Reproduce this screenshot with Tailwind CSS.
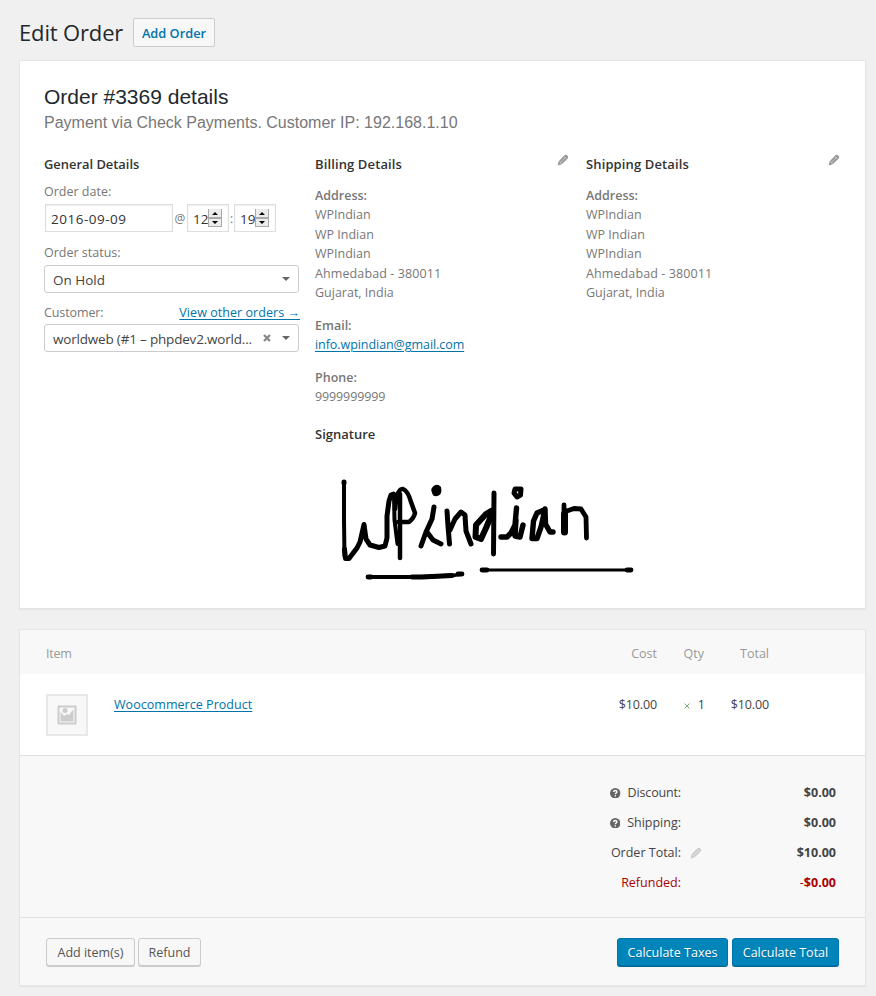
<!DOCTYPE html>
<html lang="en">
<head>
<meta charset="utf-8">
<title>Edit Order</title>
<script src="https://cdn.jsdelivr.net/npm/@tailwindcss/browser@4"></script>
</head>
<body class="bg-[#f0f0f0] font-['Open_Sans','Noto_Sans',sans-serif] text-[12.5px] leading-5 text-[#777]">
<svg class="hidden">
  <symbol id="pencil" viewBox="0 0 12 12">
    <path d="M.6 11.4 L1.7 7.2 L7.4 1.3 Q8.8 .1 10.4 1.4 Q11.9 3 10.7 4.5 L4.8 10.3 Z" fill="currentColor"/>
    <path d="M3.4 8.6 L8.3 3.7 M2.2 7.2 L4.8 9.800 M6.900 2.400 L9.500 5" stroke="#fff" stroke-opacity=".7" stroke-width=".6" fill="none"/>
  </symbol>
  <symbol id="help" viewBox="0 0 10 10">
    <circle cx="5" cy="5" r="5" fill="#666"/>
    <path d="M3.4 3.8 Q3.5 2.4 5 2.4 Q6.6 2.4 6.6 3.7 Q6.6 4.5 5.7 4.9 Q5.1 5.2 5.1 5.9 M5.1 6.9 V8" stroke="#fff" stroke-width="1.3" fill="none"/>
  </symbol>
  <symbol id="spin" viewBox="0 0 14 18">
    <rect width="14" height="18" fill="#aaa"/>
    <rect x="1" y="0" width="12" height="8" fill="#ececec"/>
    <rect x="1" y="10" width="12" height="7" fill="#ececec"/>
    <path d="M4 6 L7 3 L10 6 Z M4 12 L7 15 L10 12 Z" fill="#000"/>
  </symbol>
</svg>
<div class="h-[996px] w-[876px] overflow-hidden pl-[19px] pr-[10px] pt-[18px]">
  <header class="flex h-[29px] items-center">
    <h1 class="w-[114px] whitespace-nowrap text-[22px] leading-[29px] tracking-[-0.15px] text-[#23282d]">Edit Order</h1>
    <a class="flex h-[29px] w-[82px] items-center justify-center whitespace-nowrap rounded-[2px] border border-[#ccc] bg-[#f7f7f7] text-[12.8px] font-semibold text-[#0073aa]">Add Order</a>
  </header>

  <section class="mt-[13px] h-[549px] border border-[#e5e5e5] bg-white px-6 pt-6 shadow-[0_1px_1px_rgba(0,0,0,0.04)]">
    <h2 class="font-['Liberation_Sans',sans-serif] text-[21px] leading-6 text-[#23282d]">Order #3369 details</h2>
    <p class="mt-1 font-['Liberation_Sans',sans-serif] text-[16px] leading-5 text-[#777]">Payment via Check Payments. Customer IP: 192.168.1.10</p>

    <div class="mt-[22px] grid grid-cols-[255px_255px_255px] gap-4">
      <div>
        <h4 class="h-5 text-[12.9px] font-semibold leading-[18px] text-[#333]">General Details</h4>
        <div class="mt-[7px]">Order date:</div>
        <div class="mt-[2px] flex h-7 items-center pl-px text-[13.5px]">
          <div class="flex h-7 w-32 items-center border border-[#ddd] pl-[5px] pt-[2px] tracking-[0.5px] text-[#333] shadow-[inset_0_1px_2px_rgba(0,0,0,0.07)]">2016-09-09</div>
          <span class="w-[14px] pt-[2px] text-center text-[12px]">@</span>
          <div class="flex h-7 w-[42px] items-center border border-[#ddd] pl-[5px] text-[#333] shadow-[inset_0_1px_2px_rgba(0,0,0,0.07)]"><span class="w-[15px] overflow-hidden pt-[2px]">12</span><svg class="-mt-px h-[18px] w-[14px] shrink-0"><use href="#spin"/></svg></div>
          <span class="w-[5px] pt-[2px] text-center text-[12px]">:</span>
          <div class="flex h-7 w-[42px] items-center border border-[#ddd] pl-[5px] text-[#333] shadow-[inset_0_1px_2px_rgba(0,0,0,0.07)]"><span class="w-[15px] overflow-hidden pt-[2px]">19</span><svg class="-mt-px h-[18px] w-[14px] shrink-0"><use href="#spin"/></svg></div>
        </div>
        <div class="mt-[11px]">Order status:</div>
        <div class="mt-[2px] flex h-7 items-center justify-between rounded-[3px] border border-[#ccc] pl-2 pr-2 text-[13.5px] text-[#444]">
          <span class="pt-[2px]">On Hold</span>
          <svg class="h-1 w-2" viewBox="0 0 8 4"><path d="M0 0H8L4 4Z" fill="#666"/></svg>
        </div>
        <div class="mt-[10px] flex justify-between"><span class="tracking-[-0.1px]">Customer:</span><a class="-mr-px tracking-[0.05px] text-[#0073aa] underline underline-offset-2">View other orders →</a></div>
        <div class="mt-px flex h-7 items-center rounded-[3px] border border-[#ccc] pl-2 pr-2 text-[13.5px] text-[#444]">
          <span class="w-[210px] whitespace-nowrap pt-[2px] tracking-[-0.19px]">worldweb (#1 – phpdev2.world...</span>
          <svg class="-mt-px h-2 w-2" viewBox="0 0 8 8"><path d="M1 1L7 7M7 1L1 7" stroke="#888" stroke-width="2.3"/></svg>
          <svg class="ml-auto h-1 w-2" viewBox="0 0 8 4"><path d="M0 0H8L4 4Z" fill="#666"/></svg>
        </div>
      </div>

      <div>
        <div class="flex h-5 justify-between"><h4 class="text-[13px] font-semibold leading-[18px] tracking-[0.12px] text-[#333]">Billing Details</h4><svg class="-mt-px mr-px h-3 w-3 text-[#999]"><use href="#pencil"/></svg></div>
        <div class="mt-[10.5px] leading-[19.5px]">
          <b class="font-semibold">Address:</b><br>WPIndian<br>WP Indian<br>WPIndian<br><span class="tracking-[0.11px]">Ahmedabad - 380011</span><br>Gujarat, India
        </div>
        <div class="mt-[13px] leading-[19.5px]"><b class="font-semibold">Email:</b><br><a class="tracking-[-0.06px] text-[#0073aa] underline underline-offset-2">info.wpindian@gmail.com</a></div>
        <div class="mt-[13px] leading-[19.5px]"><b class="font-semibold">Phone:</b><br><span class="tracking-[-0.12px]">9999999999</span></div>
        <h4 class="mt-[18.5px] h-5 text-[13px] font-semibold leading-[18px] text-[#333]">Signature</h4>
        <svg class="mt-[20px] h-[125px] w-[330px]" viewBox="315 465 330 125" fill="none" stroke="#000" stroke-width="5" stroke-linecap="round" stroke-linejoin="round">
          <path stroke-width="4" d="M344 482 V520 L344.500 556"/>
          <path stroke-width="5" d="M344 482 V483 M344.500 549 L345.500 558.500 L349 558.500 L357 548 L360 542 L364 524.500 L366 539 L370 545 L379 547.500 L385 546 L387 538 L387 516 L389 501 L391 495 L393.500 494"/>
          <path stroke-width="4" d="M394 496 L394.500 520 L397.500 544"/>
          <path stroke-width="4.500" d="M400 558 V494 M395 509 L396 498 Q399 488 403 489 Q408 491 411 502 L415 513 Q414 518 409 522 L398 522"/>
          <path d="M434 507 L432 519 L426 532 L421 546 M427 532 L433 540 L441 544"/>
          <path stroke-width="6.500" d="M434.500 490 Q436 487 438 488.500 Q439 493 435.500 493 Z"/>
          <path d="M447 511 L448 526 L449.500 544 M450 530 L455 519 L461 512 L465 515 L466 531 L471 544"/>
          <path stroke-width="6" d="M491 511 L486 514 L476 525 L475.500 537 L481 539 L486 528 L491 516"/>
          <path stroke-width="5" d="M494 493 L493.500 554"/>
          <path stroke-width="5.400" d="M516.500 508 L515 525 L511 533 L507 537 L501 537 M516 520 L515 536 L520 537 L523 525"/>
          <path stroke-width="5" d="M515 489 L521 489 L520.500 495 L517 497 L514 493 Z"/>
          <path stroke-width="5.400" d="M544 510 L537 513 L533.500 521 L532 538.500 L537 538.500 L541 527 L545 509 L545.500 524 L550 532 L553 532"/>
          <path stroke-width="4.800" d="M564 505 V513 M564 512 L574 508.500 L581 509 L586 517 L586.500 538"/>
          <path stroke-width="7" d="M564.500 514 V532"/>
          <path stroke-width="3.800" d="M368 577 H420 L453 575.500 L462 574"/>
          <path stroke-width="3" d="M482 570 H630"/>
          <path stroke-width="4.800" d="M482 570 H487 M627 570 H631 M368 577 H371 M412 577 H422 L452 575.500 M458 574 H462"/>
        </svg>
      </div>

      <div>
        <div class="flex h-5 justify-between"><h4 class="text-[13px] font-semibold leading-[18px] tracking-[0.12px] text-[#333]">Shipping Details</h4><svg class="-mt-px mr-px h-3 w-3 text-[#999]"><use href="#pencil"/></svg></div>
        <div class="mt-[10.5px] leading-[19.5px]">
          <b class="font-semibold">Address:</b><br>WPIndian<br>WP Indian<br>WPIndian<br><span class="tracking-[0.11px]">Ahmedabad - 380011</span><br>Gujarat, India
        </div>
      </div>
    </div>
  </section>

  <section class="mt-5 h-[357px] border border-[#e5e5e5] bg-[#f8f8f8] shadow-[0_1px_1px_rgba(0,0,0,0.04)]">
    <div class="grid h-11 grid-cols-[68px_1fr_80px_47px_65px] items-center pl-[26px] pr-24 pt-[3px] text-right text-[#999]">
      <span class="text-left tracking-[-0.2px]">Item</span><span></span><span>Cost</span><span>Qty</span><span>Total</span>
    </div>
    <div class="grid h-[82px] grid-cols-[68px_1fr_80px_48px_64px] items-start border-b border-[#dfdfdf] bg-white pl-[26px] pr-24 pt-[21px] text-right text-[#444]">
      <div class="-mt-px flex h-[42px] w-[42px] items-center justify-center border-2 border-[#e8e8e8] bg-[#f8f8f8]">
        <svg class="h-5 w-5" viewBox="0 0 20 20"><rect x=".5" y=".5" width="19" height="19" rx="1" fill="#ccc"/><rect x="2.500" y="2.500" width="15" height="15" fill="#f8f8f8"/><path d="M3.500 16.500V7L7 11L10 9L12 10L16.500 4.500V16.500Z" fill="#ccc"/><circle cx="8" cy="5.500" r="2.500" fill="#ccc"/></svg>
      </div>
      <a class="text-left tracking-[0.04px] text-[#0073aa] underline underline-offset-2">Woocommerce Product</a>
      <span class="tracking-[-0.12px]">$10.00</span>
      <span class="flex items-center justify-end gap-2"><svg class="mt-0.5 h-[6px] w-[6px]" viewBox="0 0 6 6"><path d="M.5 .5L5.500 5.500M5.500 .5L.5 5.500" stroke="#6fa06f" stroke-width=".9"/></svg>1</span>
      <span class="tracking-[-0.12px]">$10.00</span>
    </div>
    <div class="flex h-[162px] flex-col border-b border-[#dfdfdf] pr-[29px] pt-[22px] leading-[30px] text-[#444]">
      <div class="flex h-[30px] items-center justify-end"><svg class="mr-[7px] h-[10.5px] w-[10.5px]" viewBox="0 0 10 10"><use href="#help"/></svg><span class="tracking-[-0.15px]">Discount:</span><b class="w-[155px] text-right">$0.00</b></div>
      <div class="flex h-[30px] items-center justify-end"><svg class="mr-[7px] h-[10.5px] w-[10.5px]" viewBox="0 0 10 10"><use href="#help"/></svg>Shipping:<b class="w-[155px] text-right">$0.00</b></div>
      <div class="flex h-[30px] items-center justify-end">Order Total:<svg class="ml-[9px] h-3 w-3 text-[#ccc]"><use href="#pencil"/></svg><b class="w-[134px] text-right">$10.00</b></div>
      <div class="flex h-[30px] items-center justify-end text-[#a00]">Refunded:<span class="w-[155px] text-right">-<b>$0.00</b></span></div>
    </div>
    <div class="flex gap-1 pl-[26px] pr-[26px] pt-5">
      <button class="h-7 w-[89px] whitespace-nowrap rounded-[3px] border border-[#ccc] bg-[#f7f7f7] pt-[2px] text-[#555] shadow-[0_1px_0_#ccc]">Add item(s)</button>
      <button class="-ml-px h-7 w-[63px] whitespace-nowrap rounded-[3px] border border-[#ccc] bg-[#f7f7f7] pt-[2px] text-[#555] shadow-[0_1px_0_#ccc]">Refund</button>
      <button class="ml-auto h-7 w-[111px] whitespace-nowrap rounded-[3px] border border-[#0073aa] bg-[#0085ba] pt-[2px] text-white shadow-[0_1px_0_#006799] [text-shadow:0_1px_1px_#006799]">Calculate Taxes</button>
      <button class="h-7 w-[107px] whitespace-nowrap rounded-[3px] border border-[#0073aa] bg-[#0085ba] pt-[2px] text-white shadow-[0_1px_0_#006799] [text-shadow:0_1px_1px_#006799]">Calculate Total</button>
    </div>
  </section>
</div>
</body>
</html>
